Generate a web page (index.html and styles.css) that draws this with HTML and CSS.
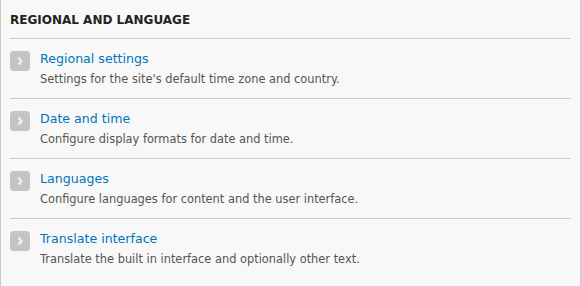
FILE: index.html
```html
<!DOCTYPE html>
<html lang="en">
<head>
  <meta charset="UTF-8">
  <title>Regional and language</title>
  <link rel="stylesheet" href="styles.css">
</head>
<body>
  <div class="panel">
    <h2 class="panel-title">Regional and language</h2>
    <ul class="admin-list">
      <li>
        <span class="arrow"><svg width="8" height="10" viewBox="0 0 8 10"><path d="M2.5 1.5 L5.5 5 L2.5 8.5" fill="none" stroke="#f4f4f4" stroke-width="2"/></svg></span>
        <div class="item-text">
          <a href="#">Regional settings</a>
          <p>Settings for the site's default time zone and country.</p>
        </div>
      </li>
      <li>
        <span class="arrow"><svg width="8" height="10" viewBox="0 0 8 10"><path d="M2.5 1.5 L5.5 5 L2.5 8.5" fill="none" stroke="#f4f4f4" stroke-width="2"/></svg></span>
        <div class="item-text">
          <a href="#">Date and time</a>
          <p>Configure display formats for date and time.</p>
        </div>
      </li>
      <li>
        <span class="arrow"><svg width="8" height="10" viewBox="0 0 8 10"><path d="M2.5 1.5 L5.5 5 L2.5 8.5" fill="none" stroke="#f4f4f4" stroke-width="2"/></svg></span>
        <div class="item-text">
          <a href="#">Languages</a>
          <p>Configure languages for content and the user interface.</p>
        </div>
      </li>
      <li>
        <span class="arrow"><svg width="8" height="10" viewBox="0 0 8 10"><path d="M2.5 1.5 L5.5 5 L2.5 8.5" fill="none" stroke="#f4f4f4" stroke-width="2"/></svg></span>
        <div class="item-text">
          <a href="#">Translate interface</a>
          <p>Translate the built in interface and optionally other text.</p>
        </div>
      </li>
    </ul>
  </div>
</body>
</html>
```

FILE: styles.css
```css
html, body {
  margin: 0;
  height: 100%;
}
body {
  font-family: "DejaVu Sans", Verdana, sans-serif;
  background: #f8f8f8;
}
.panel {
  box-sizing: border-box;
  height: 100%;
  padding: 0 9px;
  border-left: 1px solid #ccc;
  border-right: 1px solid #ccc;
  background: #f8f8f8;
}
.panel-title {
  margin: 0;
  padding: 12px 0 9px;
  font-size: 12px;
  line-height: 17px;
  font-weight: bold;
  text-transform: uppercase;
  color: #222;
  border-bottom: 1px solid #ccc;
}
.admin-list {
  list-style: none;
  margin: 0;
  padding: 0;
}
.admin-list li {
  display: flex;
  gap: 10px;
  height: 60px;
  padding-top: 12px;
  box-sizing: border-box;
  border-bottom: 1px solid #ccc;
}
.admin-list li:last-child {
  border-bottom: none;
}
.arrow {
  flex: none;
  display: flex;
  align-items: center;
  justify-content: center;
  width: 20px;
  height: 20px;
  border-radius: 4px;
  background: #c4c4c4;
}
.item-text {
  margin-top: -1px;
}
.admin-list a {
  display: block;
  font-size: 12.6px;
  line-height: 18px;
  color: #0074bd;
  text-decoration: none;
}
.admin-list p {
  margin: 3px 0 0;
  font-size: 11.4px;
  line-height: 16px;
  color: #555;
}
```
